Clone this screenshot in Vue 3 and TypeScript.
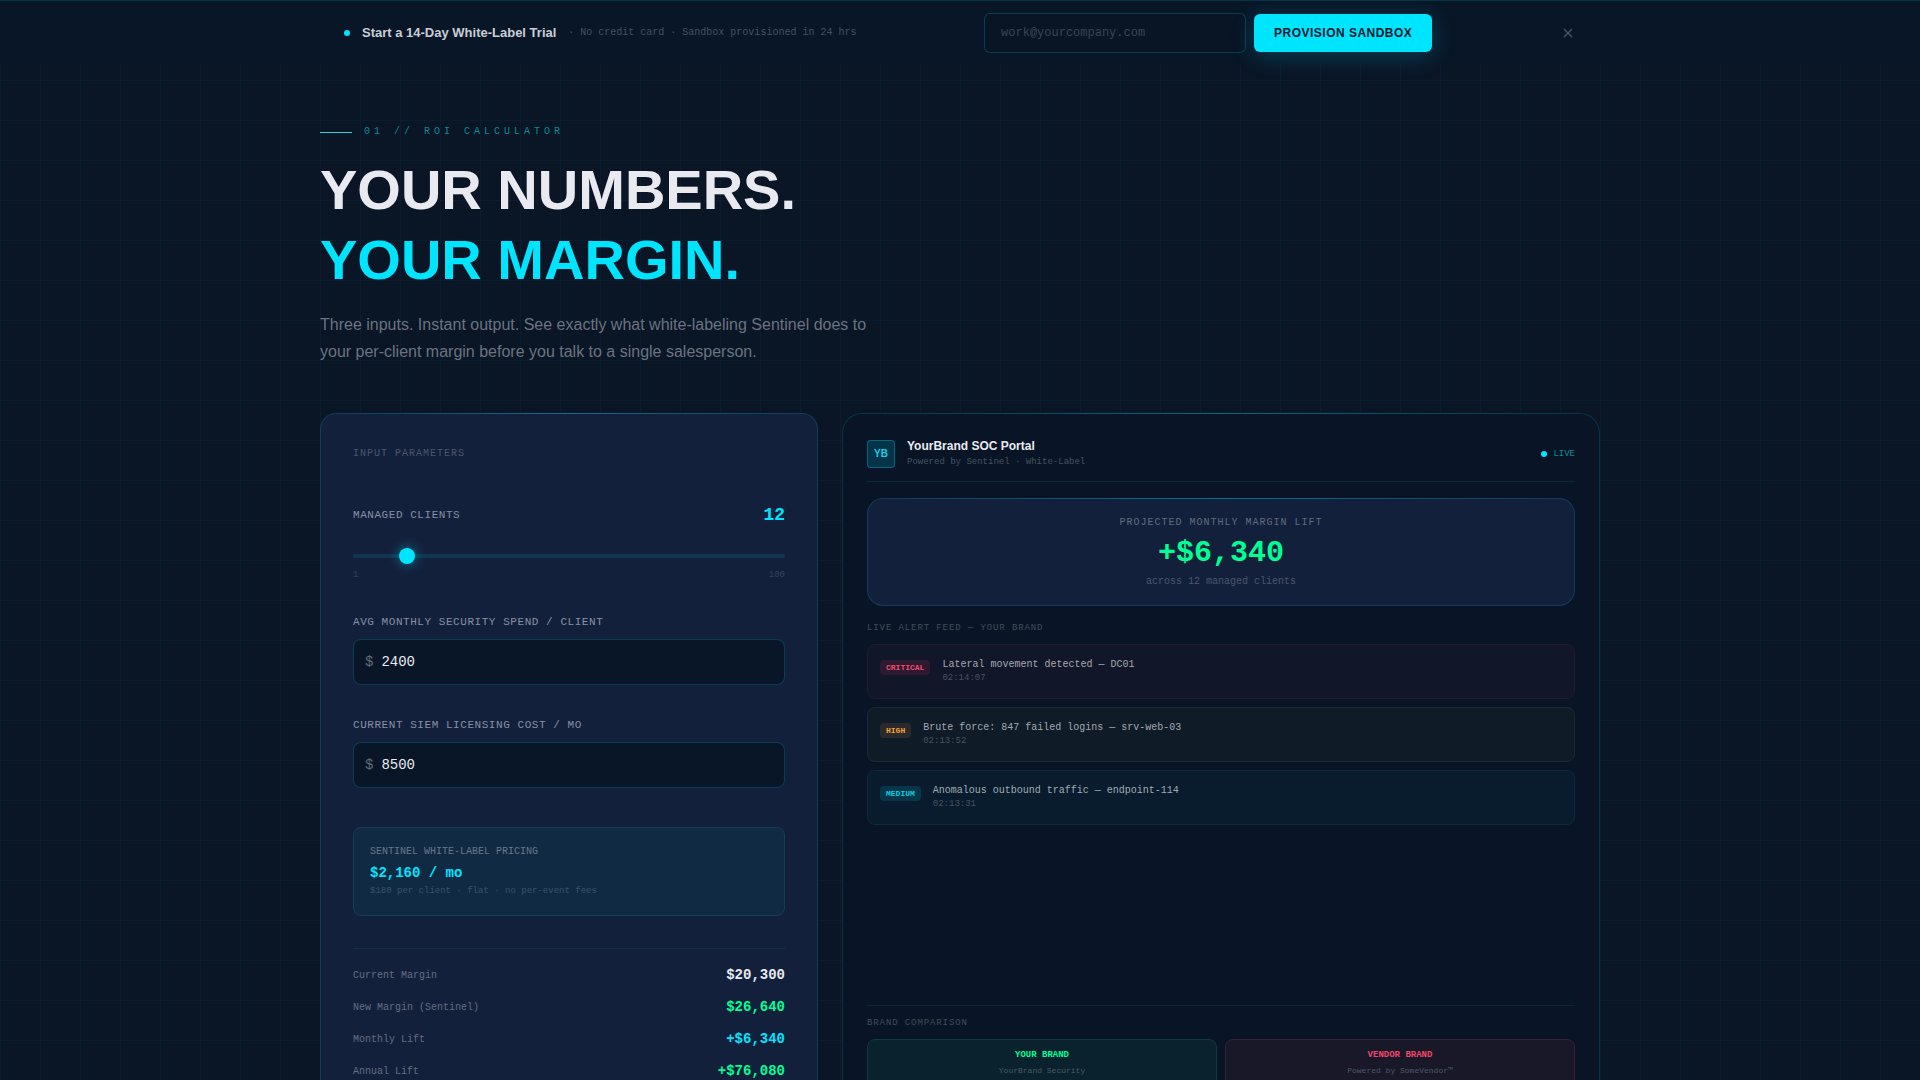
<script setup lang="ts">
import { computed, ref } from 'vue'

interface Alert {
  level: 'critical' | 'high' | 'medium'
  title: string
  time: string
}

const email = ref('')
const bannerOpen = ref(true)
const clients = ref(12)
const spend = ref(2400)
const siem = ref(8500)

const pricePerClient = 180
const licence = computed(() => clients.value * pricePerClient)
const currentMargin = computed(() => clients.value * spend.value - siem.value)
const newMargin = computed(() => clients.value * spend.value - licence.value)
const lift = computed(() => newMargin.value - currentMargin.value)

const usd = (n: number): string => '$' + n.toLocaleString('en-US')

const results = computed(() => [
  { label: 'Current Margin', value: usd(currentMargin.value), tone: 'plain' },
  { label: 'New Margin (Sentinel)', value: usd(newMargin.value), tone: 'green' },
  { label: 'Monthly Lift', value: '+' + usd(lift.value), tone: 'cyan' },
  { label: 'Annual Lift', value: '+' + usd(lift.value * 12), tone: 'green' },
])

const alerts: Alert[] = [
  { level: 'critical', title: 'Lateral movement detected — DC01', time: '02:14:07' },
  { level: 'high', title: 'Brute force: 847 failed logins — srv-web-03', time: '02:13:52' },
  { level: 'medium', title: 'Anomalous outbound traffic — endpoint-114', time: '02:13:31' },
]
</script>

<template>
  <div class="page">
    <header v-if="bannerOpen" class="banner">
      <div class="banner-inner">
        <div class="pitch">
          <span class="dot"></span>
          <strong>Start a 14-Day White-Label Trial</strong>
          <span class="fine">· No credit card · Sandbox provisioned in 24 hrs</span>
        </div>
        <form class="signup" @submit.prevent>
          <input v-model="email" type="email" aria-label="Work email" placeholder="work@yourcompany.com" />
          <button type="submit" class="provision">PROVISION SANDBOX</button>
        </form>
        <button type="button" class="close" aria-label="Dismiss" @click="bannerOpen = false">
          <svg width="16" height="16" viewBox="0 0 16 16"><path d="M4 4l8 8M12 4l-8 8" /></svg>
        </button>
      </div>
    </header>

    <main class="content">
      <p class="eyebrow">01 // ROI CALCULATOR</p>
      <h1>YOUR NUMBERS.<br /><em>YOUR MARGIN.</em></h1>
      <p class="intro">
        Three inputs. Instant output. See exactly what white-labeling Sentinel does to your
        per-client margin before you talk to a single salesperson.
      </p>

      <div class="columns">
        <section class="card inputs">
          <h2>INPUT PARAMETERS</h2>

          <div class="slider-field">
            <div class="slider-head">
              <label for="clients">MANAGED CLIENTS</label>
              <output for="clients">{{ clients }}</output>
            </div>
            <input id="clients" v-model.number="clients" type="range" min="1" max="100" />
            <div class="scale"><span>1</span><span>100</span></div>
          </div>

          <div class="field">
            <label for="spend">AVG MONTHLY SECURITY SPEND / CLIENT</label>
            <div class="money">
              <span>$</span>
              <input id="spend" v-model.number="spend" type="text" inputmode="numeric" />
            </div>
          </div>

          <div class="field">
            <label for="siem">CURRENT SIEM LICENSING COST / MO</label>
            <div class="money">
              <span>$</span>
              <input id="siem" v-model.number="siem" type="text" inputmode="numeric" />
            </div>
          </div>

          <div class="pricing">
            <p class="pricing-title">SENTINEL WHITE-LABEL PRICING</p>
            <p class="pricing-value">{{ usd(licence) }} / mo</p>
            <p class="pricing-note">$180 per client · flat · no per-event fees</p>
          </div>

          <dl class="results">
            <div v-for="row in results" :key="row.label">
              <dt>{{ row.label }}</dt>
              <dd :class="row.tone">{{ row.value }}</dd>
            </div>
          </dl>
        </section>

        <section class="card portal">
          <div class="portal-head">
            <span class="logo">YB</span>
            <div class="portal-name">
              <h3>YourBrand SOC Portal</h3>
              <p>Powered by Sentinel · White-Label</p>
            </div>
            <span class="live"><span class="dot"></span>LIVE</span>
          </div>

          <div class="card lift">
            <p class="lift-title">PROJECTED MONTHLY MARGIN LIFT</p>
            <p class="lift-value">+{{ usd(lift) }}</p>
            <p class="lift-note">across {{ clients }} managed clients</p>
          </div>

          <h4>LIVE ALERT FEED — YOUR BRAND</h4>
          <ul class="alerts">
            <li v-for="a in alerts" :key="a.time" :class="a.level">
              <span class="badge">{{ a.level.toUpperCase() }}</span>
              <div>
                <p>{{ a.title }}</p>
                <time>{{ a.time }}</time>
              </div>
            </li>
          </ul>

          <div class="comparison">
            <h4>BRAND COMPARISON</h4>
            <div class="brands">
              <div class="brand yours">
                <strong>YOUR BRAND</strong>
                <span>YourBrand Security</span>
              </div>
              <div class="brand vendor">
                <strong>VENDOR BRAND</strong>
                <span>Powered by SomeVendor™</span>
              </div>
            </div>
          </div>
        </section>
      </div>
    </main>
  </div>
</template>

<style>
body {
  margin: 0;
  background: #0a1526;
}
</style>

<style scoped>
* {
  box-sizing: border-box;
}

.page {
  --cyan: #00e5ff;
  --green: #00ff94;
  --mono: 'Liberation Mono', 'Courier New', monospace;
  --sans: 'Liberation Sans', Arial, sans-serif;
  min-height: 100vh;
  background-color: #0a1526;
  background-image:
    linear-gradient(rgba(0, 229, 255, 0.04) 1px, transparent 1px),
    linear-gradient(90deg, rgba(0, 229, 255, 0.04) 1px, transparent 1px);
  background-size: 40px 40px;
  color: #e8eaf0;
  font-family: var(--mono);
}

h1, h2, h3, h4, p, ul, dl, dd {
  margin: 0;
  padding: 0;
}

input, button {
  font-family: inherit;
}

.dot {
  width: 6px;
  height: 6px;
  border-radius: 50%;
  background: var(--cyan);
}

/* Trial banner */
.banner {
  height: 64px;
  border-top: 1px solid rgba(0, 229, 255, 0.15);
  background: #081627;
}

.banner-inner {
  display: flex;
  align-items: center;
  justify-content: space-between;
  height: 100%;
  max-width: 1280px;
  margin: 0 auto;
  padding: 0 24px;
}

.pitch {
  display: flex;
  align-items: center;
  gap: 12px;
}

.pitch strong {
  font-family: var(--sans);
  font-size: 13px;
  color: #c9ced6;
}

.fine {
  color: #465160;
  font-size: 10px;
  line-height: 14px;
}

.signup {
  display: flex;
  align-items: center;
  gap: 8px;
}

.signup input {
  width: 262px;
  height: 40px;
  padding: 0 16px;
  border: 1px solid rgba(0, 229, 255, 0.2);
  border-radius: 6px;
  outline: none;
  background: #091425;
  color: #e8eaf0;
  font-size: 12px;
}

.signup input::placeholder {
  color: #3a4553;
}

.provision {
  height: 38px;
  padding: 0 20px;
  border: 0;
  border-radius: 6px;
  background: var(--cyan);
  box-shadow: 0 4px 24px rgba(0, 229, 255, 0.2);
  color: #0a1628;
  font-family: var(--sans);
  font-size: 12px;
  font-weight: 700;
  letter-spacing: 0.04em;
}

.close {
  display: flex;
  padding: 0;
  border: 0;
  background: none;
}

.close svg {
  fill: none;
  stroke: #46505f;
  stroke-width: 1.5;
}

/* Heading */
.content {
  max-width: 1280px;
  margin: 0 auto;
  padding: 61px 0 64px;
}

.eyebrow {
  display: flex;
  align-items: center;
  gap: 12px;
  color: #088c9a;
  font-size: 10px;
  line-height: 14px;
  letter-spacing: 0.4em;
}

.eyebrow::before {
  content: '';
  width: 32px;
  height: 1px;
  background: #2fcfe0;
}

h1 {
  margin-top: 16px;
  font-family: var(--sans);
  font-size: 56px;
  line-height: 70px;
}

h1 em {
  color: var(--cyan);
  font-style: normal;
}

.intro {
  max-width: 560px;
  margin: 16px 0 48px;
  color: #6b7380;
  font-family: var(--sans);
  font-size: 16px;
  line-height: 27px;
}

.columns {
  display: grid;
  grid-template-columns: 249fr 379fr;
  gap: 24px;
}

/* Cards */
.card {
  position: relative;
  border: 1px solid rgba(0, 229, 255, 0.15);
  border-radius: 16px;
  background: #13203b;
}

.card::before {
  content: '';
  position: absolute;
  top: -1px;
  left: 16px;
  right: 16px;
  height: 1px;
  background: linear-gradient(90deg, transparent, rgba(0, 229, 255, 0.3), transparent);
}

.inputs {
  padding: 32px;
}

h2 {
  color: #4b566b;
  font-size: 10px;
  font-weight: 400;
  line-height: 16px;
  letter-spacing: 0.1em;
}

.slider-field {
  margin-top: 40px;
}

.slider-head {
  display: flex;
  align-items: center;
  justify-content: space-between;
  line-height: 26px;
}

label {
  color: #8790a2;
  font-size: 11px;
  letter-spacing: 0.05em;
}

output {
  color: var(--cyan);
  font-size: 18px;
  font-weight: 700;
}

input[type='range'] {
  display: block;
  appearance: none;
  width: 100%;
  height: 4px;
  margin: 26px 0 10px;
  border-radius: 2px;
  outline: none;
  background: #113650;
}

input[type='range']::-webkit-slider-thumb {
  appearance: none;
  width: 16px;
  height: 16px;
  border-radius: 50%;
  background: var(--cyan);
  box-shadow: 0 0 12px rgba(0, 229, 255, 0.5);
}

.scale {
  display: flex;
  justify-content: space-between;
  margin-bottom: 32px;
  color: #36435a;
  font-size: 9px;
  line-height: 14px;
}

.field label {
  display: block;
  line-height: 16px;
}

.money {
  display: flex;
  align-items: center;
  gap: 8px;
  height: 46px;
  margin: 9px 0 32px;
  padding: 0 11px;
  border: 1px solid rgba(0, 229, 255, 0.2);
  border-radius: 8px;
  background: #091627;
  font-size: 14px;
}

.money span {
  color: #626c79;
}

.money input {
  flex: 1;
  min-width: 0;
  padding: 0;
  border: 0;
  outline: none;
  background: none;
  color: #e8eaf0;
  font-size: 14px;
}

.pricing {
  height: 89px;
  margin-top: 39px;
  padding: 16px;
  border: 1px solid #153c55;
  border-radius: 8px;
  background: #112a44;
}

.pricing-title {
  color: #66788b;
  font-size: 10px;
  line-height: 16px;
}

.pricing-value {
  margin: 3px 0 1px;
  color: var(--cyan);
  font-size: 14px;
  font-weight: 700;
  line-height: 20px;
}

.pricing-note {
  color: #3b5267;
  font-size: 9px;
  line-height: 14px;
}

.results {
  margin-top: 32px;
  padding-top: 10px;
  border-top: 1px solid #14304b;
}

.results div {
  display: flex;
  align-items: center;
  justify-content: space-between;
  height: 32px;
}

dt {
  color: #646e80;
  font-size: 10px;
}

dd {
  font-size: 14px;
  font-weight: 700;
}

.green {
  color: var(--green);
}

.cyan {
  color: var(--cyan);
}

/* Branded portal preview */
.portal {
  display: flex;
  flex-direction: column;
  padding: 24px;
  border-radius: 20px;
  background: #091526;
}

.portal-head {
  display: flex;
  align-items: center;
  gap: 12px;
  margin-bottom: 16px;
  padding-bottom: 12px;
  border-bottom: 1px solid rgba(0, 229, 255, 0.1);
}

.logo {
  display: grid;
  place-items: center;
  width: 28px;
  height: 28px;
  border: 1px solid rgba(0, 229, 255, 0.3);
  border-radius: 4px;
  background: #053448;
  color: #15cfe6;
  font-family: var(--sans);
  font-size: 10px;
  font-weight: 700;
}

.portal-name h3 {
  font-family: var(--sans);
  font-size: 12px;
  line-height: 17px;
}

.portal-name p {
  color: #465160;
  font-size: 9px;
  line-height: 14px;
}

.live {
  display: flex;
  align-items: center;
  gap: 6px;
  margin-left: auto;
  color: #0b8c99;
  font-size: 9px;
}

.lift {
  height: 108px;
  padding: 16px;
  text-align: center;
}

.lift-title {
  color: #626c7f;
  font-size: 10px;
  line-height: 16px;
  letter-spacing: 0.1em;
}

.lift-value {
  margin: 3px 0;
  color: var(--green);
  font-size: 30px;
  font-weight: 700;
  line-height: 38px;
}

.lift-note {
  color: #4b566b;
  font-size: 10px;
  line-height: 14px;
}

h4 {
  color: #414c5b;
  font-size: 9px;
  font-weight: 400;
  line-height: 14px;
  letter-spacing: 0.1em;
}

.lift + h4 {
  margin: 15px 0 9px;
}

.alerts {
  display: flex;
  flex-direction: column;
  gap: 8px;
  list-style: none;
}

.alerts li {
  display: flex;
  align-items: flex-start;
  gap: 12px;
  min-height: 55px;
  padding: 12px;
  border: 1px solid;
  border-radius: 8px;
}

.alerts p {
  color: #a3a9b2;
  font-size: 10px;
  line-height: 15px;
}

time {
  display: block;
  color: #485260;
  font-size: 9px;
  line-height: 13px;
}

.badge {
  margin-top: 3px;
  padding: 0 6px;
  border-radius: 4px;
  font-size: 8px;
  font-weight: 700;
  line-height: 15px;
}

.alerts .critical {
  border-color: #231a2c;
  background: #121629;
}

.critical .badge {
  background: #2d1a30;
  color: #ef4a6c;
}

.alerts .high {
  border-color: #1d2931;
  background: #0f1b27;
}

.high .badge {
  background: #2a2a2b;
  color: #f2a33c;
}

.alerts .medium {
  border-color: #0b2a3b;
  background: #081c2e;
}

.medium .badge {
  background: #073649;
  color: #0bcbe2;
}

.comparison {
  margin-top: auto;
  padding-top: 10px;
  border-top: 1px solid rgba(0, 229, 255, 0.1);
}

.brands {
  display: grid;
  grid-template-columns: 1fr 1fr;
  gap: 8px;
  margin-top: 9px;
}

.brand {
  display: flex;
  flex-direction: column;
  gap: 2px;
  padding: 8px 8px 16px;
  border: 1px solid;
  border-radius: 8px;
  text-align: center;
}

.brand strong {
  font-size: 9px;
  line-height: 14px;
}

.brand span {
  color: #4c5a66;
  font-size: 8px;
  line-height: 14px;
}

.yours {
  border-color: #0c3b41;
  background: #09222e;
}

.yours strong {
  color: var(--green);
}

.vendor {
  border-color: #3a1f36;
  background: #181829;
}

.vendor strong {
  color: #f0466a;
}
</style>
